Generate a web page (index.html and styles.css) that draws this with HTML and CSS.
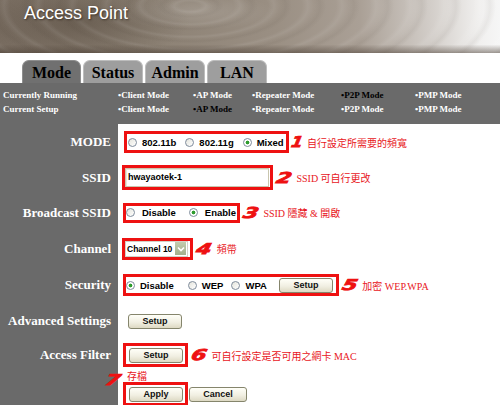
FILE: index.html
```html
<!DOCTYPE html>
<html lang="zh-Hant">
<head>
  <meta charset="UTF-8">
  <title>Access Point</title>
  <link rel="stylesheet" href="styles.css">
</head>
<body>
  <div class="banner">
    <span class="banner-title">Access Point</span>
  </div>

  <div class="tabs">
    <div class="tab active">Mode</div>
    <div class="tab">Status</div>
    <div class="tab">Admin</div>
    <div class="tab">LAN</div>
  </div>

  <div class="status">
    <div class="status-row">
      <span class="status-label">Currently Running</span>
      <span>&bull;Client Mode</span>
      <span>&bull;AP Mode</span>
      <span>&bull;Repeater Mode</span>
      <span class="on">&bull;P2P Mode</span>
      <span>&bull;PMP Mode</span>
    </div>
    <div class="status-row">
      <span class="status-label">Current Setup</span>
      <span>&bull;Client Mode</span>
      <span class="on">&bull;AP Mode</span>
      <span>&bull;Repeater Mode</span>
      <span>&bull;P2P Mode</span>
      <span>&bull;PMP Mode</span>
    </div>
  </div>

  <div class="form">
    <div class="row row-mode">
      <div class="label">MODE</div>
      <div class="field">
        <div class="box box-mode">
          <span class="radio"><i class="dot"></i>802.11b</span>
          <span class="radio"><i class="dot"></i>802.11g</span>
          <span class="radio"><i class="dot checked"></i>Mixed</span>
        </div>
        <span class="num num-one">1</span>
        <span class="note">自行設定所需要的頻寬</span>
      </div>
    </div>

    <div class="row row-ssid">
      <div class="label">SSID</div>
      <div class="field">
        <div class="box box-ssid">
          <div class="text-input">hwayaotek-1</div>
        </div>
        <span class="num">2</span>
        <span class="note">SSID 可自行更改</span>
      </div>
    </div>

    <div class="row row-broadcast">
      <div class="label">Broadcast SSID</div>
      <div class="field">
        <div class="box box-broadcast">
          <span class="radio"><i class="dot"></i>Disable</span>
          <span class="radio"><i class="dot checked"></i>Enable</span>
        </div>
        <span class="num">3</span>
        <span class="note">SSID 隱藏 &amp; 開啟</span>
      </div>
    </div>

    <div class="row row-channel">
      <div class="label">Channel</div>
      <div class="field">
        <div class="box box-channel">
          <div class="select">
            <span>Channel 10</span>
            <span class="select-arrow">
              <svg width="8" height="6" viewBox="0 0 8 6"><path d="M1 1.5 L4 4.5 L7 1.5" fill="none" stroke="#fff" stroke-width="1.6"/></svg>
            </span>
          </div>
        </div>
        <span class="num">4</span>
        <span class="note">頻帶</span>
      </div>
    </div>

    <div class="row row-security">
      <div class="label">Security</div>
      <div class="field">
        <div class="box box-security">
          <span class="radio"><i class="dot checked"></i>Disable</span>
          <span class="radio"><i class="dot"></i>WEP</span>
          <span class="radio"><i class="dot"></i>WPA</span>
          <button class="btn">Setup</button>
        </div>
        <span class="num">5</span>
        <span class="note">加密 WEP.WPA</span>
      </div>
    </div>

    <div class="row row-advanced">
      <div class="label">Advanced Settings</div>
      <div class="field">
        <button class="btn btn-plain">Setup</button>
      </div>
    </div>

    <div class="row row-filter">
      <div class="label">Access Filter</div>
      <div class="field">
        <div class="box box-button">
          <button class="btn">Setup</button>
        </div>
        <span class="num">6</span>
        <span class="note">可自行設定是否可用之網卡 MAC</span>
      </div>
    </div>

    <div class="row row-actions">
      <div class="label"></div>
      <div class="field field-stack">
        <div class="save-note">
          <span class="num num-seven">7</span>
          <span class="note">存檔</span>
        </div>
        <div class="actions">
          <div class="box box-button">
            <button class="btn">Apply</button>
          </div>
          <button class="btn btn-cancel">Cancel</button>
        </div>
      </div>
    </div>
  </div>
</body>
</html>
```

FILE: styles.css
```css
body {
  margin: 0;
  width: 500px;
  height: 405px;
  overflow: hidden;
  background-color: #FFFFFF;
  font-family: 'Liberation Serif', serif;
}

/* header picture */
.banner {
  height: 53px;
  box-sizing: border-box;
  padding: 3px 0 0 24px;
  background-color: #8C8174;
  background-image:
    linear-gradient(to bottom, rgba(0, 0, 0, 0) 84%, rgba(70, 58, 48, 0.5) 100%),
    radial-gradient(ellipse 80px 18px at 195px 12px, rgba(255, 255, 255, 0.14), rgba(255, 255, 255, 0)),
    repeating-radial-gradient(ellipse 300px 110px at 190px 6px, rgba(255, 255, 255, 0) 0px, rgba(255, 255, 255, 0) 10px, rgba(255, 255, 255, 0.07) 16px, rgba(255, 255, 255, 0) 22px, rgba(60, 50, 40, 0.06) 28px, rgba(255, 255, 255, 0) 34px),
    radial-gradient(ellipse 110px 40px at 80px 22px, rgba(70, 58, 46, 0.4), rgba(70, 58, 46, 0)),
    linear-gradient(to right, #7a6e62 0%, #8c8174 30%, #9a8f83 55%, #aaa096 72%, #d2cdc8 86%, #f1f0ef 96%, #f6f6f6 100%);
}

.banner-title {
  font-family: 'Liberation Sans', Arial, sans-serif;
  font-size: 18px;
  color: #FFFFFF;
  text-shadow: 1px 1px 2px rgba(40, 30, 20, 0.7);
}

/* tabs */
.tabs {
  height: 30px;
  box-sizing: border-box;
  padding-left: 22px;
  display: flex;
  align-items: flex-end;
  gap: 2px;
}

.tab {
  width: 60px;
  height: 23px;
  box-sizing: border-box;
  border: 1px solid #BDBDBD;
  border-bottom: none;
  border-radius: 7px 7px 0 0;
  background-color: #9E9E9E;
  font-weight: bold;
  font-size: 16px;
  line-height: 24px;
  text-align: center;
  color: #000;
}

.tab.active {
  width: 59px;
  background-color: #707070;
  border-color: #8E8E8E;
}

/* running / setup band */
.status {
  height: 41px;
  box-sizing: border-box;
  padding-top: 5px;
  background-color: #6A6A6A;
}

.status-row {
  display: grid;
  grid-template-columns: 118px 75px 59px 89px 74px 1fr;
  height: 14px;
  line-height: 14px;
  font-size: 9px;
  font-weight: bold;
  color: #FFFFFF;
  white-space: nowrap;
}

.status-label {
  padding-left: 3px;
}

.status-row .on {
  color: #000;
}

/* form rows */
.row {
  display: flex;
}

.row-mode { height: 36px; }
.row-ssid { height: 35px; }
.row-broadcast { height: 35px; }
.row-channel { height: 37px; }
.row-security { height: 36px; }
.row-advanced { height: 36px; }
.row-filter { height: 32px; }
.row-actions { height: 34px; }

.label {
  width: 118px;
  flex-shrink: 0;
  box-sizing: border-box;
  padding-right: 7px;
  background-color: #6A6A6A;
  color: #FFFFFF;
  font-size: 13px;
  font-weight: bold;
  text-align: right;
  display: flex;
  align-items: center;
  justify-content: flex-end;
  white-space: nowrap;
}

.field {
  flex: 1;
  display: flex;
  align-items: center;
  padding-left: 5px;
  font-family: 'Liberation Sans', Arial, sans-serif;
  font-size: 9.5px;
  font-weight: bold;
  color: #000;
}

.box {
  display: flex;
  align-items: center;
  flex-shrink: 0;
  box-sizing: border-box;
  border: 3px solid #EE1111;
}

.box-mode {
  height: 22px;
  margin-left: 1px;
  padding: 0 2px 0 1px;
  gap: 9px;
}

.box-ssid {
  height: 25px;
  margin-left: -1px;
  padding: 0 1px 0 0;
}

.box-broadcast {
  height: 20px;
  padding: 0 1px 0 0;
  gap: 13px;
}

.box-broadcast .radio {
  gap: 7px;
}

.box-channel {
  height: 22px;
  margin-left: -1px;
  padding: 0 2px 0 0;
}

.box-security {
  height: 22px;
  padding: 0 3px 0 0;
  gap: 8px;
}

.box-security .radio:first-child {
  margin-right: 6px;
}

.box-security .btn {
  margin-left: 4px;
}

.box-button {
  height: 24px;
  padding: 0 2px 0 3px;
}

/* radio buttons */
.radio {
  display: inline-flex;
  align-items: center;
  gap: 5px;
  white-space: nowrap;
}

.dot {
  width: 9px;
  height: 9px;
  box-sizing: border-box;
  border: 1px solid #7F8C9C;
  border-radius: 50%;
  background: linear-gradient(135deg, #E4E4DC, #FFFFFF);
}

.dot.checked {
  background: radial-gradient(circle, #2E9C2E 0 1.6px, #FFFFFF 2.2px);
}

/* text input */
.text-input {
  width: 144px;
  height: 19px;
  box-sizing: border-box;
  border: 1px solid #C9C6AE;
  box-shadow: inset 1px 1px 0 #E9E7DA;
  padding-left: 2px;
  font-size: 9px;
  line-height: 17px;
}

/* dropdown */
.select {
  height: 16px;
  box-sizing: border-box;
  border: 1px solid #D2D2C8;
  display: flex;
  align-items: center;
  gap: 3px;
  padding: 0 1px 0 1px;
  font-size: 8.5px;
  white-space: nowrap;
}

.select-arrow {
  width: 11px;
  height: 13px;
  background: linear-gradient(#C3CCAE, #A3AE8C);
  display: flex;
  align-items: center;
  justify-content: center;
}

/* buttons */
.btn {
  width: 54px;
  height: 15px;
  padding: 0;
  flex-shrink: 0;
  box-sizing: border-box;
  border: 1px solid #85856C;
  border-radius: 3px;
  background: linear-gradient(#FFFFF8, #F1EFE2 55%, #DDD9C3);
  font-family: 'Liberation Sans', Arial, sans-serif;
  font-size: 9px;
  font-weight: bold;
  color: #111;
}

.btn-plain {
  margin-left: 5px;
}

.btn-cancel {
  width: 58px;
  margin-left: 1px;
}

/* red annotations */
.num {
  display: inline-block;
  margin: 0 7px 0 6px;
  color: #EE1111;
  font-family: 'DejaVu Sans', sans-serif;
  font-size: 15px;
  font-style: italic;
  font-weight: bold;
  line-height: 16px;
  -webkit-text-stroke: 0.8px #EE1111;
  transform: scaleX(1.45) skewX(-10deg);
}

.num-one {
  margin: 0 5px 0 3px;
  transform: scaleX(1.1) skewX(-10deg);
}

.note {
  color: #E8161C;
  font-family: 'Liberation Serif', 'Noto Sans CJK TC', serif;
  font-size: 10px;
  font-weight: normal;
  white-space: nowrap;
}

.field-stack {
  flex-direction: column;
  align-items: flex-start;
  justify-content: flex-start;
}

.save-note {
  position: relative;
  height: 11px;
  line-height: 11px;
  padding-left: 4px;
}

.num-seven {
  position: absolute;
  left: -15px;
  top: 1px;
  margin: 0;
}

.actions {
  display: flex;
  align-items: center;
}
```
